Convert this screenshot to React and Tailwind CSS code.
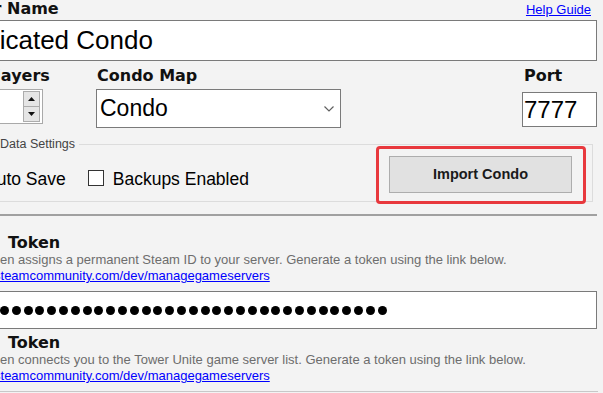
import React from "react";

const label =
  "font-['DejaVu_Sans',sans-serif] font-bold text-[16px] leading-[18px] text-[#111]";

function Arrow({ up }) {
  return (
    <svg width="7" height="4" viewBox="0 0 7 4">
      <polygon
        points={up ? "0,4 7,4 3.5,0" : "0,0 7,0 3.5,4"}
        fill="#111"
      />
    </svg>
  );
}

function TokenBlock({ text }) {
  return (
    <>
      <div className={label + " ml-[8px]"}>Token</div>
      <div className="text-[13px] leading-[15px] text-[#6d6d6d] whitespace-nowrap">
        {text}
      </div>
      <a className="mt-[1px] ml-[-45px] block text-[13px] leading-[15px] text-[#0000ff] underline whitespace-nowrap">
        https://steamcommunity.com/dev/managegameservers
      </a>
    </>
  );
}

export default function App() {
  const dots = Array.from({ length: 33 });

  return (
    <div className="w-[603px] h-[393px] overflow-hidden bg-[#f3f3f3] font-['Liberation_Sans',Arial,sans-serif] text-black">
      {/* server name */}
      <div className="flex h-[20px] items-start justify-between">
        <span className={label + " ml-[-58px] whitespace-nowrap"}>Server Name</span>
        <a className="mr-[12px] mt-[2px] text-[13px] leading-[15px] text-[#0000ff] underline">
          Help Guide
        </a>
      </div>
      <div className="ml-[-52px] flex h-[41px] w-[649px] items-center border border-[#7a7a7a] bg-white pl-[3px] text-[26px] whitespace-nowrap">
        Dedicated Condo
      </div>

      {/* players / map / port */}
      <div className="flex items-start">
        <div className="ml-[-60px] mt-[6px] w-[103px]">
          <div className={label + " pl-[1px] whitespace-nowrap"}>Max Players</div>
          <div className="mt-[4px] flex h-[35px] justify-end border border-[#a9a9a9] bg-white py-[1px] pr-[2px]">
            <div className="flex w-[17px] flex-col">
              <div className="flex h-[16px] items-center justify-center border border-[#acacac] bg-[#e5e5e5]">
                <Arrow up />
              </div>
              <div className="flex h-[15px] items-center justify-center border border-t-0 border-[#acacac] bg-[#e5e5e5]">
                <Arrow />
              </div>
            </div>
          </div>
        </div>

        <div className="ml-[53px] mt-[6px] w-[245px]">
          <div className={label + " pl-[1px]"}>Condo Map</div>
          <div className="mt-[4px] flex h-[39px] items-center justify-between border border-[#7a7a7a] bg-white pl-[3px] pr-[6px] text-[23px]">
            <span>Condo</span>
            <svg width="10" height="6" viewBox="0 0 10 6">
              <polyline points="0.5,0.5 5,5 9.5,0.5" fill="none" stroke="#606060" strokeWidth="1.2" />
            </svg>
          </div>
        </div>

        <div className="ml-[181px] mt-[6px] w-[75px]">
          <div className={label + " pl-[2px]"}>Port</div>
          <div className="mt-[7px] flex h-[35px] items-center border border-[#7a7a7a] bg-white pl-[1px] text-[24px]">
            7777
          </div>
        </div>
      </div>

      {/* data settings */}
      <fieldset className="ml-[-20px] mt-[9px] h-[65px] w-[613px] border border-[#dcdcdc]">
        <legend className="ml-[19px] pr-[4px] text-[12.5px] leading-[14px] text-[#444]">
          Data Settings
        </legend>
        <div className="flex h-[49px] items-start">
          <span className="ml-[4px] mt-[19px] text-[17.5px] leading-[19px] whitespace-nowrap">
            Auto Save
          </span>
          <div className="ml-[22px] mt-[19px] h-[16px] w-[16px] border border-[#333] bg-white" />
          <span className="ml-[9px] mt-[19px] text-[17.5px] leading-[19px] whitespace-nowrap">
            Backups Enabled
          </span>
          <div className="ml-auto mr-[6px] mt-[-5px] rounded-[4px] border-[3px] border-[#e8383d] pl-[10px] pr-[11px] pt-[7px] pb-[8px]">
            <button className="flex h-[37px] w-[183px] items-center justify-center border border-[#adadad] bg-[#e1e1e1] text-[14.5px] font-bold text-[#1a1a1a]">
              Import Condo
            </button>
          </div>
        </div>
      </fieldset>

      <div className="mt-[12px] w-[597px] border-t-2 border-[#a0a0a0]" />

      {/* tokens */}
      <div className="mt-[18px]">
        <TokenBlock text="en assigns a permanent Steam ID to your server. Generate a token using the link below." />
      </div>

      <div className="ml-[-10px] mt-[8px] flex h-[38px] w-[607px] items-center border border-[#7a7a7a] bg-white pl-[9px]">
        <div className="flex gap-[2.8px]">
          {dots.map((_, i) => (
            <div key={i} className="h-[9px] w-[9px] rounded-full bg-black" />
          ))}
        </div>
      </div>

      <div className="mt-[5px]">
        <TokenBlock text="en connects you to the Tower Unite game server list. Generate a token using the link below." />
      </div>

      <div className="mt-[8px] w-[598px] border-t border-[#c8c8c8]" />
    </div>
  );
}
